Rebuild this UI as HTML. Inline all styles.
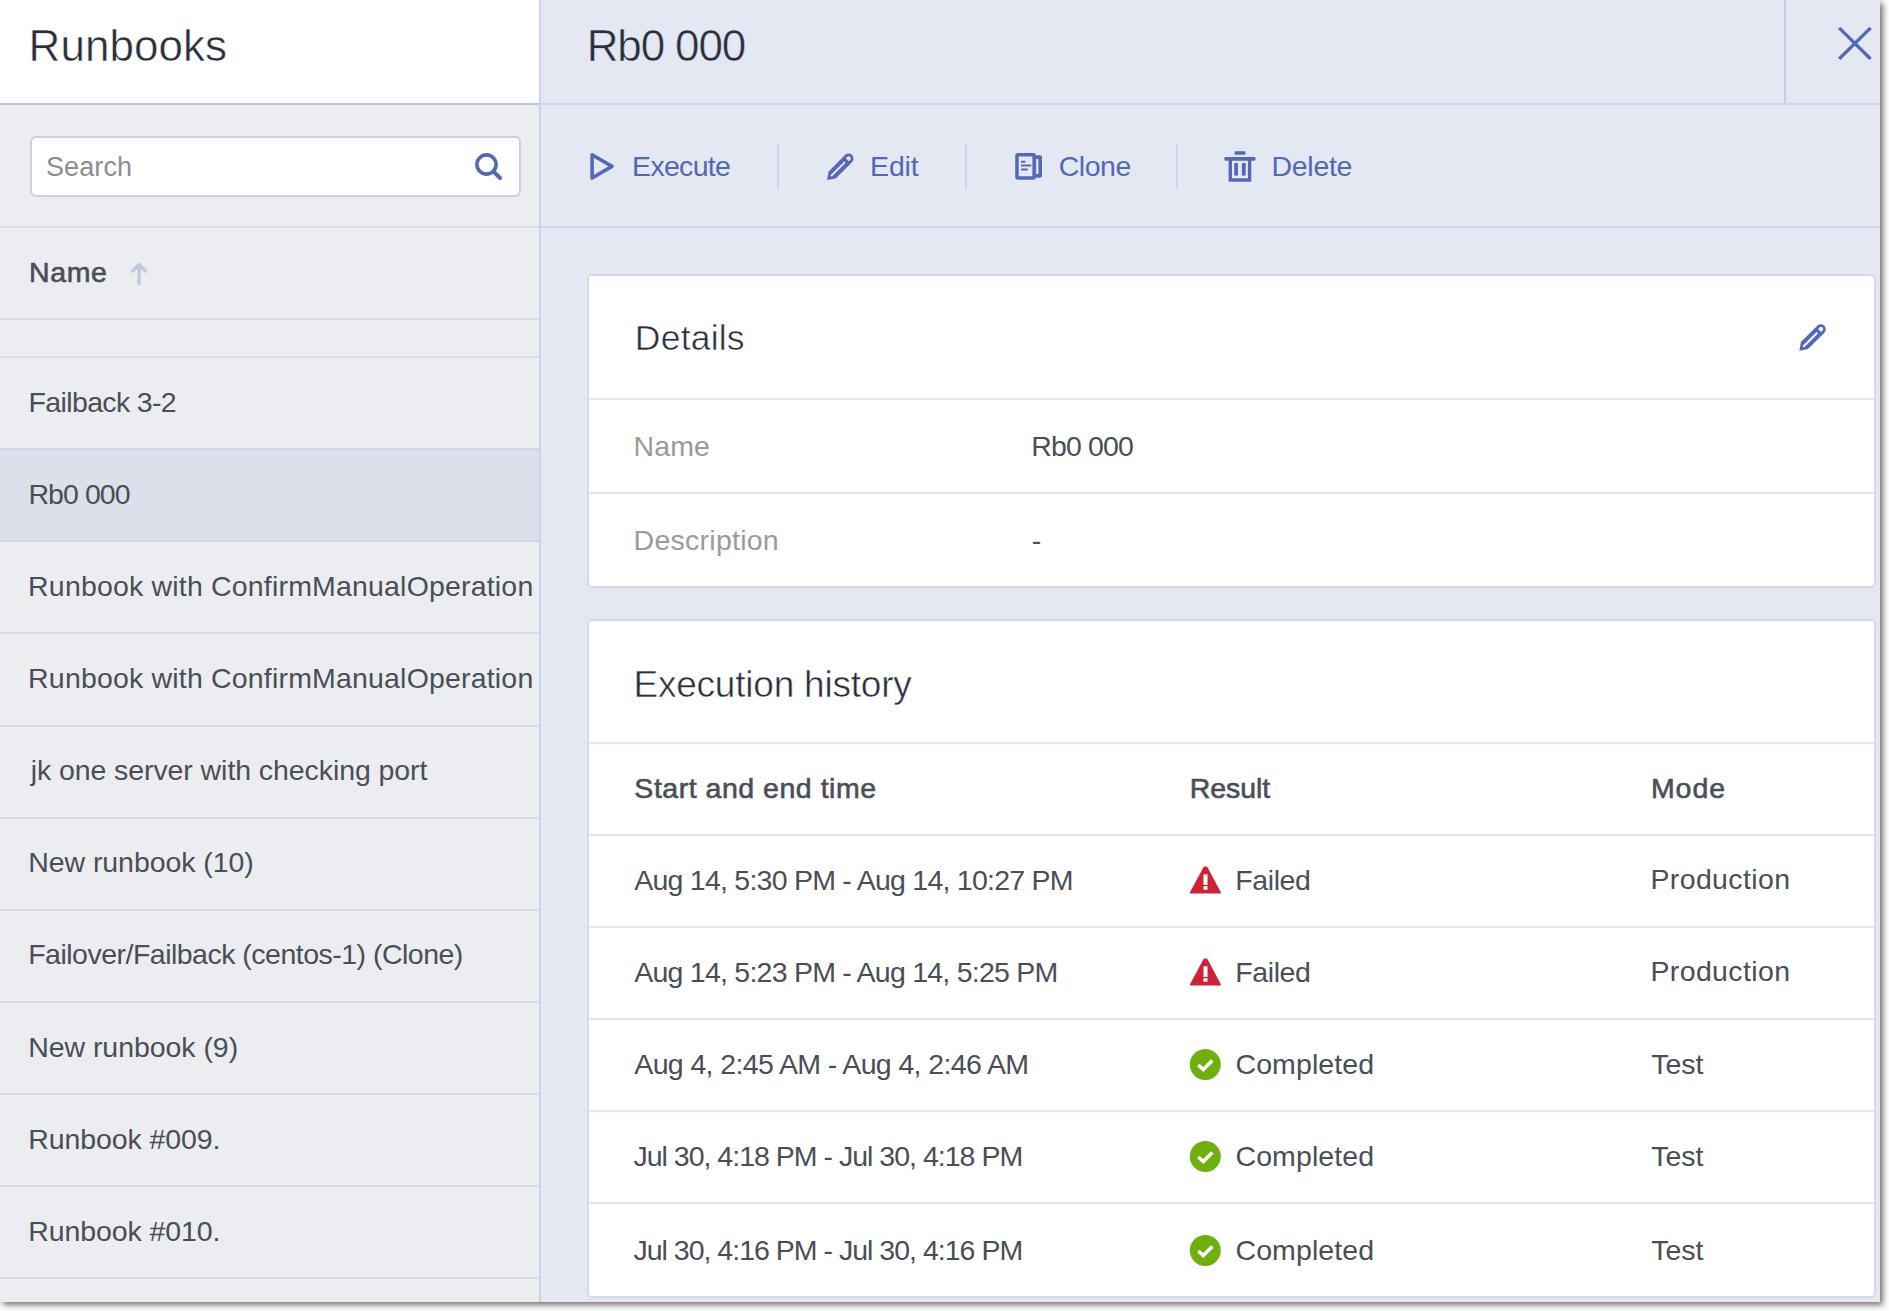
<!DOCTYPE html>
<html><head><meta charset="utf-8">
<style>
*{margin:0;padding:0;box-sizing:border-box}
html,body{width:1889px;height:1311px;background:#fff;overflow:hidden;font-family:"Liberation Sans",sans-serif;}
#win{position:absolute;left:0;top:0;width:1880px;height:1302px;box-shadow:3px 3px 6px rgba(0,0,0,0.55);background:#E4E8F3;overflow:hidden}
.t{position:absolute;white-space:pre;line-height:1}
.bl{}
.a{position:absolute}
.hl{position:absolute;height:2px}
</style></head><body>
<div id="win">
<div class="a" style="left:0;top:0;width:539px;height:1302px;background:#ECEDF1"></div>
<div class="a" style="left:0;top:0;width:539px;height:104px;background:#fff"></div>
<div class="hl" style="left:0;top:103px;width:539px;background:#BAC5DE"></div>
<div class="a" style="left:30px;top:136px;width:491px;height:61px;background:#fff;border:2px solid #C8D0E4;border-radius:6px"></div>
<svg class="a" style="left:473px;top:151px" width="32" height="32" viewBox="0 0 32 32"><circle cx="13.5" cy="13.5" r="9.6" fill="none" stroke="#5468B5" stroke-width="3.6"/><line x1="20.5" y1="20.5" x2="27" y2="27" stroke="#5468B5" stroke-width="4" stroke-linecap="round"/></svg>
<div class="hl" style="left:0;top:226px;width:539px;background:#D7DCE8"></div>
<svg class="a" style="left:129px;top:261px" width="20" height="24" viewBox="0 0 20 24"><path d="M10 4 V22.5 M3.5 10 L10 3.5 L16.5 10" fill="none" stroke="#BFC9DF" stroke-width="3.3" stroke-linecap="round" stroke-linejoin="round"/></svg>
<div class="hl" style="left:0;top:318px;width:539px;background:#D7DCE8"></div>
<div class="hl" style="left:0;top:356px;width:539px;background:#D7DCE8"></div>
<div class="a" style="left:0;top:449px;width:539px;height:93px;background:#DCE0EA"></div>
<div class="hl" style="left:0;top:448px;width:539px;background:#CFD6E6"></div>
<div class="hl" style="left:0;top:540px;width:539px;background:#CFD6E6"></div>
<div class="hl" style="left:0;top:632px;width:539px;background:#D7DCE8"></div>
<div class="hl" style="left:0;top:725px;width:539px;background:#D7DCE8"></div>
<div class="hl" style="left:0;top:817px;width:539px;background:#D7DCE8"></div>
<div class="hl" style="left:0;top:909px;width:539px;background:#D7DCE8"></div>
<div class="hl" style="left:0;top:1001px;width:539px;background:#D7DCE8"></div>
<div class="hl" style="left:0;top:1093px;width:539px;background:#D7DCE8"></div>
<div class="hl" style="left:0;top:1185px;width:539px;background:#D7DCE8"></div>
<div class="hl" style="left:0;top:1277px;width:539px;background:#D7DCE8"></div>
<div class="a" style="left:539px;top:0;width:2px;height:1302px;background:#CBD3E6"></div>

<div class="a" style="left:1784px;top:0;width:2px;height:104px;background:#C6CEE6"></div>
<svg class="a" style="left:1832px;top:20px" width="46" height="46" viewBox="0 0 46 46"><path d="M8.4 9.1 L37.4 37.7 M37.4 9.1 L8.4 37.7" stroke="#5468B5" stroke-width="3.4" stroke-linecap="square"/></svg>
<div class="hl" style="left:541px;top:103px;width:1339px;background:#D0D6EA"></div>
<svg class="a" style="left:584px;top:146px" width="38" height="42" viewBox="0 0 38 42"><path d="M8.1 8.7 L28 20.4 L8.1 32 Z" fill="none" stroke="#5468B5" stroke-width="3.6" stroke-linejoin="round"/></svg>
<div class="a" style="left:777px;top:144px;width:2px;height:45px;background:#CFD5EA"></div>
<svg class="a" style="left:820px;top:146px" width="42" height="42" viewBox="-21 -21 42 42"><g transform="translate(-1.2,0.3) rotate(-45)"><path fill-rule="evenodd" fill="#5468B5" d="M-18 0 L-10.8 -5 H12.3 A5 5 0 0 1 12.3 5 H-10.8 Z M-12.5 -1 H7.3 V1 H-12.5 Z M10.6 -2.1 H12.6 A2.1 2.1 0 0 1 12.6 2.1 H10.6 Z"/></g></svg>
<div class="a" style="left:965px;top:144px;width:2px;height:45px;background:#CFD5EA"></div>
<svg class="a" style="left:1008px;top:146px" width="42" height="42" viewBox="0 0 42 42"><rect x="8.95" y="8.65" width="17.2" height="23.3" rx="1" fill="none" stroke="#5468B5" stroke-width="3.5"/><path d="M27.8 9.3 H32 A2 2 0 0 1 34 11.3 V29.7 A2 2 0 0 1 32 31.7 H27.8 Z M28.2 13 V28 H30.4 V13 Z" fill="#5468B5" fill-rule="evenodd"/><path d="M13.8 15.7 H16.7 M13.8 19.6 H22.6 M13.8 23.6 H18.9" stroke="#5468B5" stroke-width="2" stroke-linecap="round"/></svg>
<div class="a" style="left:1176px;top:144px;width:2px;height:45px;background:#CFD5EA"></div>
<svg class="a" style="left:1218px;top:146px" width="44" height="42" viewBox="0 0 44 42"><rect x="16.5" y="5.3" width="11.1" height="3.4" rx="1.2" fill="#5468B5"/><rect x="6.4" y="11" width="31.1" height="3.7" rx="1.2" fill="#5468B5"/><path d="M12.3 13 V34 H31.6 V13" fill="none" stroke="#5468B5" stroke-width="3.4"/><rect x="16.2" y="16.8" width="3.8" height="13" rx="1.5" fill="#5468B5"/><rect x="23.9" y="16.8" width="3.8" height="13" rx="1.5" fill="#5468B5"/></svg>
<div class="hl" style="left:541px;top:226px;width:1339px;background:#D0D6EA"></div>

<div class="a" style="left:587px;top:274px;width:1289px;height:314px;background:#fff;border:2px solid #D3DAEB;border-radius:5px"></div>
<svg class="a" style="left:1792px;top:316px" width="42" height="42" viewBox="-21 -21 42 42"><g transform="translate(-0.9,0.9) rotate(-45)"><path fill-rule="evenodd" fill="#5468B5" d="M-18 0 L-10.8 -5 H12.3 A5 5 0 0 1 12.3 5 H-10.8 Z M-12.5 -1 H7.3 V1 H-12.5 Z M10.6 -2.1 H12.6 A2.1 2.1 0 0 1 12.6 2.1 H10.6 Z"/></g></svg>
<div class="hl" style="left:589px;top:398px;width:1285px;background:#E2E6F0"></div>
<div class="hl" style="left:589px;top:492px;width:1285px;background:#E2E6F0"></div>

<div class="a" style="left:587px;top:619px;width:1289px;height:679px;background:#fff;border:2px solid #D3DAEB;border-radius:5px"></div>
<div class="hl" style="left:589px;top:742px;width:1285px;background:#E2E6F0"></div>
<div class="hl" style="left:589px;top:834px;width:1285px;background:#E2E6F0"></div>
<div class="hl" style="left:589px;top:926px;width:1285px;background:#E2E6F0"></div>
<div class="hl" style="left:589px;top:1018px;width:1285px;background:#E2E6F0"></div>
<div class="hl" style="left:589px;top:1110px;width:1285px;background:#E2E6F0"></div>
<div class="hl" style="left:589px;top:1202px;width:1285px;background:#E2E6F0"></div>

<svg class="a" style="left:1184px;top:860px" width="44" height="40" viewBox="0 0 44 40"><path d="M20.3 7.4 H22.7 L36.1 32.7 H6.7 Z" fill="#CE2336" stroke="#CE2336" stroke-width="1.6" stroke-linejoin="round"/><rect x="19.5" y="14.3" width="4" height="10.7" fill="#fff"/><rect x="19.5" y="26.2" width="4" height="3.5" fill="#fff"/></svg>
<svg class="a" style="left:1184px;top:952px" width="44" height="40" viewBox="0 0 44 40"><path d="M20.3 7.4 H22.7 L36.1 32.7 H6.7 Z" fill="#CE2336" stroke="#CE2336" stroke-width="1.6" stroke-linejoin="round"/><rect x="19.5" y="14.3" width="4" height="10.7" fill="#fff"/><rect x="19.5" y="26.2" width="4" height="3.5" fill="#fff"/></svg>
<svg class="a" style="left:1189px;top:1048px" width="33" height="33" viewBox="0 0 33 33"><circle cx="16.3" cy="16.5" r="15.5" fill="#6FAF10"/><path d="M9.3 17 L14.3 21.5 L23.3 12.5" fill="none" stroke="#fff" stroke-width="3.6"/></svg>
<svg class="a" style="left:1189px;top:1140px" width="33" height="33" viewBox="0 0 33 33"><circle cx="16.3" cy="16.5" r="15.5" fill="#6FAF10"/><path d="M9.3 17 L14.3 21.5 L23.3 12.5" fill="none" stroke="#fff" stroke-width="3.6"/></svg>
<svg class="a" style="left:1189px;top:1234px" width="33" height="33" viewBox="0 0 33 33"><circle cx="16.3" cy="16.5" r="15.5" fill="#6FAF10"/><path d="M9.3 17 L14.3 21.5 L23.3 12.5" fill="none" stroke="#fff" stroke-width="3.6"/></svg>
<div class="t" style="left:28.57px;top:24px;font-size:44px;font-weight:normal;letter-spacing:0.048px;color:#2A2F3C;-webkit-text-stroke:0.5px #fff">Runbooks</div>
<div class="t" style="left:586.67px;top:24px;font-size:44px;font-weight:normal;letter-spacing:-1.123px;color:#2A2F3C;-webkit-text-stroke:0.5px #E4E8F3">Rb0 000</div>
<div class="t bl" style="left:46.03px;top:154px;font-size:27px;font-weight:normal;letter-spacing:0.082px;color:#8A8D94">Search</div>
<div class="t bl" style="left:29.09px;top:258px;font-size:28.5px;font-weight:normal;letter-spacing:0.597px;color:#4A4E57;-webkit-text-stroke:0.6px #4A4E57">Name</div>
<div class="t bl" style="left:28.61px;top:388px;font-size:28.5px;font-weight:normal;letter-spacing:-0.65px;color:#4A4E57">Failback 3-2</div>
<div class="t bl" style="left:28.41px;top:480px;font-size:28.5px;font-weight:normal;letter-spacing:-0.928px;color:#4A4E57">Rb0 000</div>
<div class="t bl" style="left:28.11px;top:572px;font-size:28.5px;font-weight:normal;letter-spacing:0.18px;color:#4A4E57">Runbook with ConfirmManualOperation</div>
<div class="t bl" style="left:28.11px;top:664px;font-size:28.5px;font-weight:normal;letter-spacing:0.18px;color:#4A4E57">Runbook with ConfirmManualOperation</div>
<div class="t bl" style="left:30.64px;top:756px;font-size:28.5px;font-weight:normal;letter-spacing:-0.077px;color:#4A4E57">jk one server with checking port</div>
<div class="t bl" style="left:28.21px;top:848px;font-size:28.5px;font-weight:normal;letter-spacing:-0.064px;color:#4A4E57">New runbook (10)</div>
<div class="t bl" style="left:28.21px;top:940px;font-size:28.5px;font-weight:normal;letter-spacing:-0.51px;color:#4A4E57">Failover/Failback (centos-1) (Clone)</div>
<div class="t bl" style="left:28.21px;top:1033px;font-size:28.5px;font-weight:normal;letter-spacing:-0.054px;color:#4A4E57">New runbook (9)</div>
<div class="t bl" style="left:28.21px;top:1125px;font-size:28.5px;font-weight:normal;letter-spacing:-0.082px;color:#4A4E57">Runbook #009.</div>
<div class="t bl" style="left:28.21px;top:1217px;font-size:28.5px;font-weight:normal;letter-spacing:-0.082px;color:#4A4E57">Runbook #010.</div>
<div class="t bl" style="left:632.11px;top:152px;font-size:28.5px;font-weight:normal;letter-spacing:-0.702px;color:#5268B4">Execute</div>
<div class="t bl" style="left:870.01px;top:152px;font-size:28.5px;font-weight:normal;letter-spacing:-0.12px;color:#5268B4">Edit</div>
<div class="t bl" style="left:1058.80px;top:152px;font-size:28.5px;font-weight:normal;letter-spacing:-0.504px;color:#5268B4">Clone</div>
<div class="t bl" style="left:1271.41px;top:152px;font-size:28.5px;font-weight:normal;letter-spacing:-0.265px;color:#5268B4">Delete</div>
<div class="t" style="left:634.87px;top:321px;font-size:35.5px;font-weight:normal;letter-spacing:0.202px;color:#2A2F3C;-webkit-text-stroke:0.5px #fff">Details</div>
<div class="t bl" style="left:633.61px;top:432px;font-size:28.5px;font-weight:normal;letter-spacing:0.095px;color:#979AA1">Name</div>
<div class="t bl" style="left:1031.21px;top:432px;font-size:28.5px;font-weight:normal;letter-spacing:-0.861px;color:#4A4E57">Rb0 000</div>
<div class="t bl" style="left:633.61px;top:526px;font-size:28.5px;font-weight:normal;letter-spacing:0.252px;color:#979AA1">Description</div>
<div class="t bl" style="left:1031.67px;top:526px;font-size:28.5px;font-weight:normal;letter-spacing:0px;color:#4A4E57">-</div>
<div class="t" style="left:633.49px;top:666px;font-size:37px;font-weight:normal;letter-spacing:-0.217px;color:#2A2F3C;-webkit-text-stroke:0.5px #fff">Execution history</div>
<div class="t bl" style="left:634.37px;top:774px;font-size:28.5px;font-weight:normal;letter-spacing:0.518px;color:#4A4E57;-webkit-text-stroke:0.6px #4A4E57">Start and end time</div>
<div class="t bl" style="left:1189.69px;top:774px;font-size:28.5px;font-weight:normal;letter-spacing:-0.054px;color:#4A4E57;-webkit-text-stroke:0.6px #4A4E57">Result</div>
<div class="t bl" style="left:1650.89px;top:774px;font-size:28.5px;font-weight:normal;letter-spacing:0.992px;color:#4A4E57;-webkit-text-stroke:0.6px #4A4E57">Mode</div>
<div class="t bl" style="left:634.25px;top:866px;font-size:28.5px;font-weight:normal;letter-spacing:-0.757px;color:#4A4E57">Aug 14, 5:30 PM - Aug 14, 10:27 PM</div>
<div class="t bl" style="left:634.25px;top:958px;font-size:28.5px;font-weight:normal;letter-spacing:-0.762px;color:#4A4E57">Aug 14, 5:23 PM - Aug 14, 5:25 PM</div>
<div class="t bl" style="left:634.25px;top:1050px;font-size:28.5px;font-weight:normal;letter-spacing:-0.625px;color:#4A4E57">Aug 4, 2:45 AM - Aug 4, 2:46 AM</div>
<div class="t bl" style="left:633.39px;top:1142px;font-size:28.5px;font-weight:normal;letter-spacing:-0.987px;color:#4A4E57">Jul 30, 4:18 PM - Jul 30, 4:18 PM</div>
<div class="t bl" style="left:633.39px;top:1236px;font-size:28.5px;font-weight:normal;letter-spacing:-0.987px;color:#4A4E57">Jul 30, 4:16 PM - Jul 30, 4:16 PM</div>
<div class="t bl" style="left:1235.21px;top:866px;font-size:28.5px;font-weight:normal;letter-spacing:-0.376px;color:#4A4E57">Failed</div>
<div class="t bl" style="left:1235.21px;top:958px;font-size:28.5px;font-weight:normal;letter-spacing:-0.376px;color:#4A4E57">Failed</div>
<div class="t bl" style="left:1235.50px;top:1050px;font-size:28.5px;font-weight:normal;letter-spacing:0.093px;color:#4A4E57">Completed</div>
<div class="t bl" style="left:1235.50px;top:1142px;font-size:28.5px;font-weight:normal;letter-spacing:0.093px;color:#4A4E57">Completed</div>
<div class="t bl" style="left:1235.50px;top:1236px;font-size:28.5px;font-weight:normal;letter-spacing:0.093px;color:#4A4E57">Completed</div>
<div class="t bl" style="left:1650.41px;top:865px;font-size:28.5px;font-weight:normal;letter-spacing:0.379px;color:#4A4E57">Production</div>
<div class="t bl" style="left:1650.41px;top:957px;font-size:28.5px;font-weight:normal;letter-spacing:0.379px;color:#4A4E57">Production</div>
<div class="t bl" style="left:1651.24px;top:1050px;font-size:28.5px;font-weight:normal;letter-spacing:-0.063px;color:#4A4E57">Test</div>
<div class="t bl" style="left:1651.24px;top:1142px;font-size:28.5px;font-weight:normal;letter-spacing:-0.063px;color:#4A4E57">Test</div>
<div class="t bl" style="left:1651.24px;top:1236px;font-size:28.5px;font-weight:normal;letter-spacing:-0.063px;color:#4A4E57">Test</div>

</div>
</body></html>
